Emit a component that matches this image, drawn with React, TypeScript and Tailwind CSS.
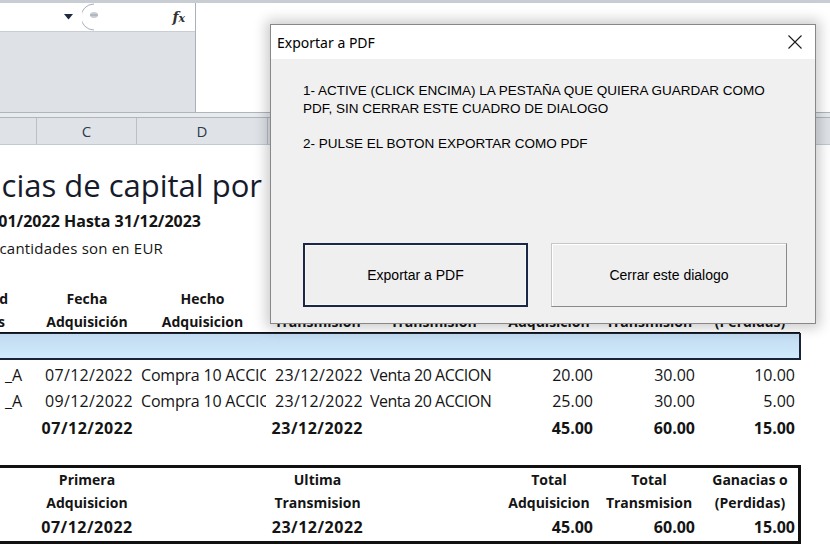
import React from 'react';

const cols = ['w-[37px]', 'w-[100px]', 'w-[131px]', 'w-[99px]', 'w-[133px]', 'w-[98px]', 'w-[102px]', 'w-[100px]'];

interface Row {
    name: string;
    fechaAdq: string;
    hechoAdq: string;
    fechaTr: string;
    hechoTr: string;
    adq: string;
    tr: string;
    gan: string;
}

const rows: Row[] = [
    { name: '_A', fechaAdq: '07/12/2022', hechoAdq: 'Compra 10 ACCIONES', fechaTr: '23/12/2022', hechoTr: 'Venta 20 ACCIONES', adq: '20.00', tr: '30.00', gan: '10.00' },
    { name: '_A', fechaAdq: '09/12/2022', hechoAdq: 'Compra 10 ACCIONES', fechaTr: '23/12/2022', hechoTr: 'Venta 20 ACCIONES', adq: '25.00', tr: '30.00', gan: '5.00' },
];

function HeaderCell({ w, a, b }: { w: string; a: string; b: string }) {
    return (
        <div className={`${w} shrink-0 overflow-hidden flex flex-col items-center`}>
            <div className="h-[24px] leading-[24px] whitespace-nowrap">{a}</div>
            <div className="h-[21px] leading-[21px] whitespace-nowrap">{b}</div>
        </div>
    );
}

export default function App() {
    return (
        <div className="w-[830px] h-[550px] relative overflow-hidden bg-white text-[#141414] font-['Open_Sans',sans-serif]">
            {/* formula bar */}
            <div className="h-[3px] bg-[#c8cdd3]" />
            <div className="flex h-[109px]">
                <div className="w-[196px] shrink-0 flex flex-col border-r border-[#aab1b9]">
                    <div className="h-[29px] bg-white flex items-center border-b border-[#c9ced4]">
                        <svg className="ml-[64px]" width="9" height="6" viewBox="0 0 9 6">
                            <polygon points="0,0 9,0 4.5,5.5" fill="#1d2a44" />
                        </svg>
                        <svg className="ml-[9px]" width="20" height="28" viewBox="0 0 20 28">
                            <path d="M12 1 A13 13 0 0 0 12 27" fill="none" stroke="#a8b0b8" strokeWidth="1" />
                            <ellipse cx="12" cy="12" rx="4" ry="3" fill="#c9ced4" />
                            <path d="M8 12 L16 12" stroke="#9aa2ab" strokeWidth="1" />
                        </svg>
                        <span className="ml-auto mr-[10px] font-['DejaVu_Serif',serif] italic font-bold text-[14px] text-[#333] leading-none">
                            f<span className="text-[11px]">x</span>
                        </span>
                    </div>
                    <div className="flex-1 bg-[#dee2e7]" />
                </div>
                <div className="flex-1 bg-white" />
            </div>
            <div className="h-[6px] bg-[#e8ebee] border-t border-b border-[#aeb5bd]" />

            {/* column letters */}
            <div className="h-[27px] flex bg-[#dfe3e8] border-b border-[#c3c9d0] text-[15px] text-[#2d3a4c]">
                {['', 'C', 'D', '', '', '', '', ''].map((c, i) => (
                    <div key={i} className={`${cols[i]} shrink-0 flex items-center justify-center border-r border-[#b9c0c8]`}>{c}</div>
                ))}
                <div className="flex-1" />
            </div>

            {/* sheet */}
            <div className="flex flex-col">
                <div className="h-[22px]" />
                <div className="h-[37px] w-[262px] flex justify-end items-center text-[31px] whitespace-nowrap text-[#161b2c]">
                    <span>Ganancias de capital por</span>
                </div>
                <div className="h-[34px] w-[201px] flex justify-end items-center text-[16px] font-bold whitespace-nowrap">
                    <span>Desde 01/01/2022 Hasta 31/12/2023</span>
                </div>
                <div className="h-[20px] w-[163px] flex justify-end items-center text-[15px] tracking-[0.2px] whitespace-nowrap">
                    <span>Todas las cantidades son en EUR</span>
                </div>
                <div className="h-[29px]" />

                {/* headers */}
                <div className="flex text-[14px] font-bold border-b border-[#111] w-[800px]">
                    <div className="w-[37px] shrink-0 overflow-hidden flex flex-col items-end">
                        <div className="h-[24px] leading-[24px] whitespace-nowrap pr-[29px]">Cantidad</div>
                        <div className="h-[21px] leading-[21px] whitespace-nowrap pr-[32px]">Acciones</div>
                    </div>
                    <HeaderCell w={cols[1]} a="Fecha" b="Adquisición" />
                    <HeaderCell w={cols[2]} a="Hecho" b="Adquisicion" />
                    <HeaderCell w={cols[3]} a="Fecha" b="Transmision" />
                    <HeaderCell w={cols[4]} a="Hecho" b="Transmision" />
                    <HeaderCell w={cols[5]} a="Total" b="Adquisicion" />
                    <HeaderCell w={cols[6]} a="Total" b="Transmision" />
                    <HeaderCell w={cols[7]} a="Ganacias o" b="(Perdidas)" />
                </div>
                <div className="h-[27px] w-[801px] border-t border-r-2 border-b-2 border-[#1a2438] bg-gradient-to-b from-[#c2daf0] to-[#d0ebfc]" />

                {/* data rows */}
                {rows.map((r, i) => (
                    <div key={i} className={`flex items-center text-[16px] w-[800px] ${i === 0 ? 'h-[28px] pt-[2px]' : 'h-[26px]'}`}>
                        <div className={`${cols[0]} shrink-0 pl-[5px]`}>{r.name}</div>
                        <div className={`${cols[1]} shrink-0 text-right pr-[4px] tracking-[0.3px]`}>{r.fechaAdq}</div>
                        <div className={`${cols[2]} shrink-0 pl-[4px]`}>
                            <div className="w-[125px] overflow-hidden whitespace-nowrap tracking-[-0.2px]">{r.hechoAdq}</div>
                        </div>
                        <div className={`${cols[3]} shrink-0 text-right pr-[4px] tracking-[0.3px]`}>{r.fechaTr}</div>
                        <div className={`${cols[4]} shrink-0 pl-[3px]`}>
                            <div className="w-[121px] overflow-hidden whitespace-nowrap tracking-[-0.5px]">{r.hechoTr}</div>
                        </div>
                        <div className={`${cols[5]} shrink-0 text-right pr-[5px]`}>{r.adq}</div>
                        <div className={`${cols[6]} shrink-0 text-right pr-[5px]`}>{r.tr}</div>
                        <div className={`${cols[7]} shrink-0 text-right pr-[5px]`}>{r.gan}</div>
                    </div>
                ))}
                <div className="flex items-center h-[27px] text-[16px] font-bold w-[800px]">
                    <div className={`${cols[0]} shrink-0`} />
                    <div className={`${cols[1]} shrink-0 text-right pr-[4px] tracking-[0.5px]`}>07/12/2022</div>
                    <div className={`${cols[2]} shrink-0`} />
                    <div className={`${cols[3]} shrink-0 text-right pr-[4px] tracking-[0.5px]`}>23/12/2022</div>
                    <div className={`${cols[4]} shrink-0`} />
                    <div className={`${cols[5]} shrink-0 text-right pr-[5px]`}>45.00</div>
                    <div className={`${cols[6]} shrink-0 text-right pr-[5px]`}>60.00</div>
                    <div className={`${cols[7]} shrink-0 text-right pr-[5px]`}>15.00</div>
                </div>
                <div className="h-[24px]" />

                {/* summary box */}
                <div className="w-[801px] border-t-[3px] border-r-[3px] border-b-[3px] border-[#111] text-[14px] font-bold">
                    <div className="flex">
                        <div className={`${cols[0]} shrink-0`} />
                        <HeaderCell w={cols[1]} a="Primera" b="Adquisicion" />
                        <div className={`${cols[2]} shrink-0`} />
                        <HeaderCell w={cols[3]} a="Ultima" b="Transmision" />
                        <div className={`${cols[4]} shrink-0`} />
                        <HeaderCell w={cols[5]} a="Total" b="Adquisicion" />
                        <HeaderCell w={cols[6]} a="Total" b="Transmision" />
                        <HeaderCell w={cols[7]} a="Ganacias o" b="(Perdidas)" />
                    </div>
                    <div className="flex items-center h-[28px] text-[16px]">
                        <div className={`${cols[0]} shrink-0`} />
                        <div className={`${cols[1]} shrink-0 text-center tracking-[0.5px]`}>07/12/2022</div>
                        <div className={`${cols[2]} shrink-0`} />
                        <div className={`${cols[3]} shrink-0 text-center tracking-[0.5px]`}>23/12/2022</div>
                        <div className={`${cols[4]} shrink-0`} />
                        <div className={`${cols[5]} shrink-0 text-right pr-[5px]`}>45.00</div>
                        <div className={`${cols[6]} shrink-0 text-right pr-[5px]`}>60.00</div>
                        <div className="w-[97px] shrink-0 text-right pr-[2px]">15.00</div>
                    </div>
                </div>
            </div>

            {/* dialog */}
            <div className="absolute left-[270px] top-[24px] w-[546px] h-[300px] border border-[#878787] bg-[#f0f0f0] shadow-[0_0_12px_4px_rgba(0,0,0,0.2)] flex flex-col">
                <div className="h-[34px] bg-white flex items-center pl-[6px] pr-[13px] font-['Noto_Sans',sans-serif] text-[14px] text-black">
                    <span>Exportar a PDF</span>
                    <svg className="ml-auto" width="14" height="14" viewBox="0 0 14 14">
                        <path d="M0.5 0.5 L13.5 13.5 M13.5 0.5 L0.5 13.5" stroke="#1a1a1a" strokeWidth="1.1" />
                    </svg>
                </div>
                <div className="flex-1 flex flex-col pl-[32px] pt-[23px] font-['Liberation_Sans',sans-serif] text-[13.5px] text-black leading-[18px]">
                    <div>
                        <div>1- ACTIVE (CLICK ENCIMA) LA PESTAÑA QUE QUIERA GUARDAR COMO</div>
                        <div>PDF, SIN CERRAR ESTE CUADRO DE DIALOGO</div>
                    </div>
                    <div className="mt-[17px]">2- PULSE EL BOTON EXPORTAR COMO PDF</div>
                    <div className="flex gap-[23px] mt-[90px] text-[14px]">
                        <button className="w-[225px] h-[64px] border-2 border-[#1b2747] bg-[#efefef] shadow-[inset_0_0_0_1px_#f8f8f8]">Exportar a PDF</button>
                        <button className="w-[236px] h-[64px] border border-[#c7c7c7] border-r-[#8a8a8a] border-b-[#8a8a8a] bg-[#efefef] shadow-[inset_1px_1px_0_#ffffff]">Cerrar este dialogo</button>
                    </div>
                </div>
            </div>
        </div>
    );
}
